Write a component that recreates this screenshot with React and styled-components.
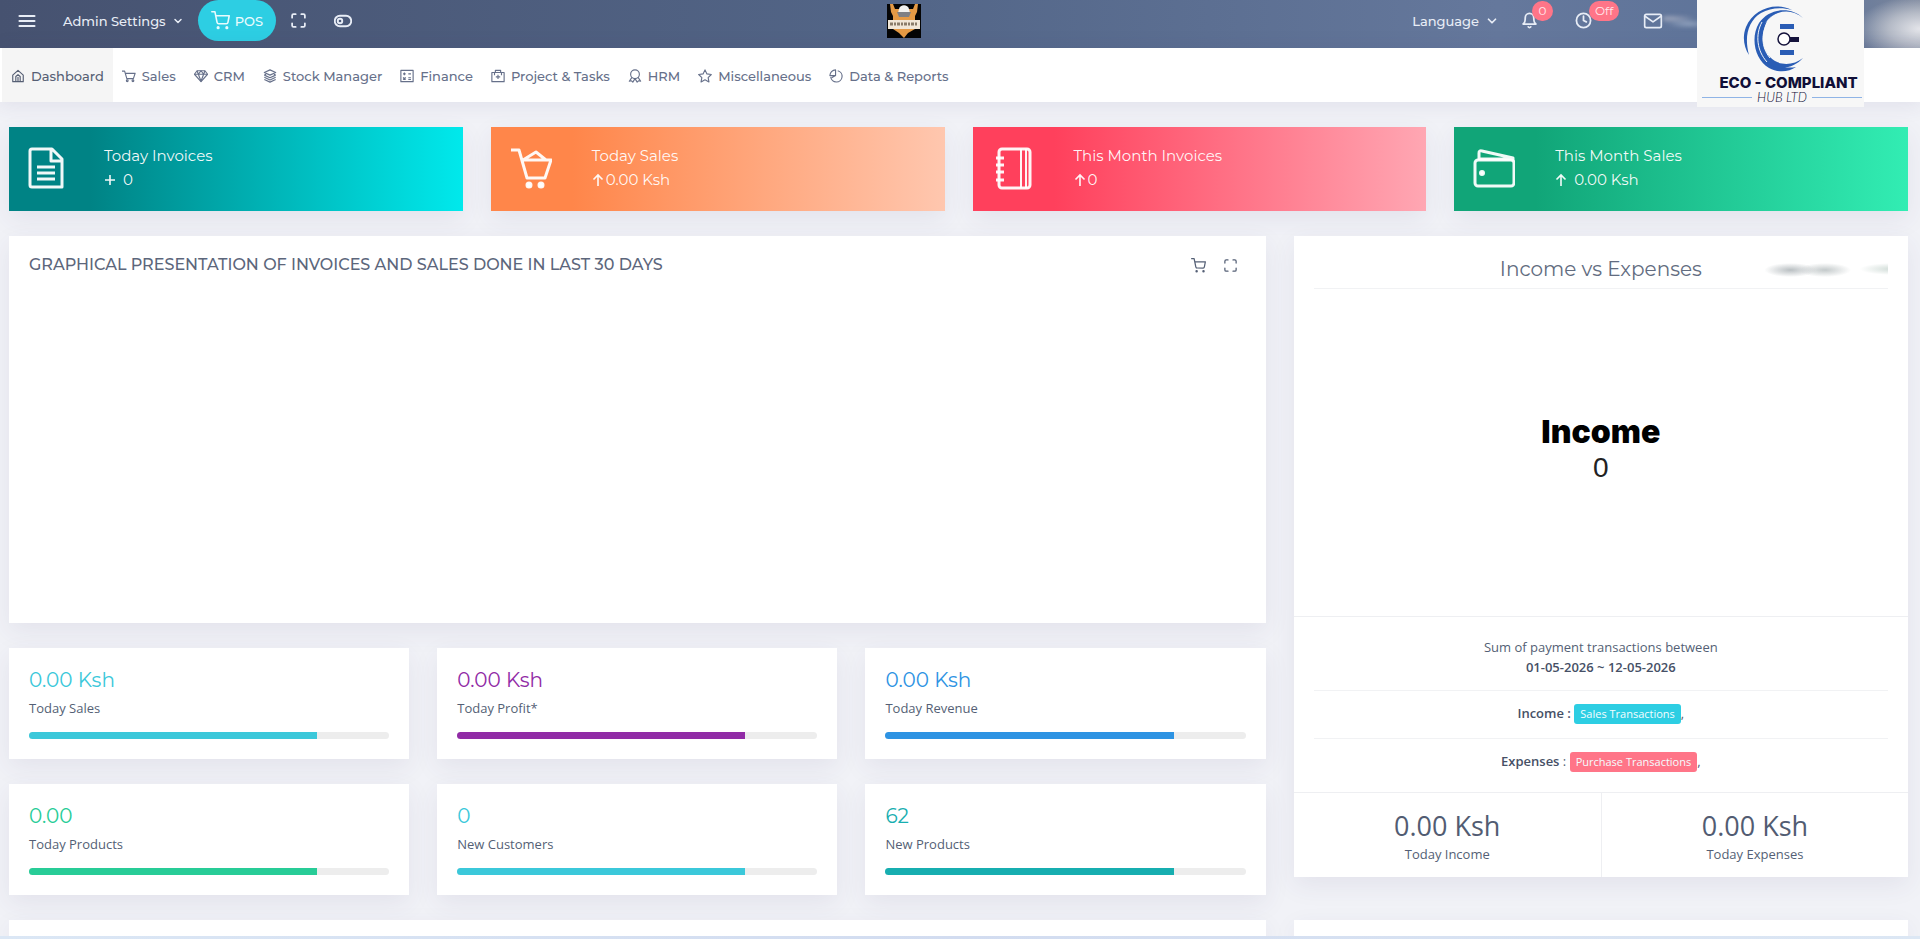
import React from "react";
import styled, { createGlobalStyle } from "styled-components";
import { FiMenu, FiMaximize, FiToggleLeft, FiBell, FiClock, FiMail, FiChevronDown, FiShoppingCart } from "react-icons/fi";

const display = `Montserrat, Inter, "Liberation Sans", sans-serif`;
const body = `"Open Sans", "Noto Sans", sans-serif`;

const GlobalStyle = createGlobalStyle`
  *, *::before, *::after { box-sizing: border-box; }
  body {
    margin: 0;
    background: #f1f2f7;
    color: #545f75;
    font: 13px/20px ${body};
  }
  button { border: 0; padding: 0; background: none; color: inherit; font: inherit; cursor: pointer; }
  a { color: inherit; text-decoration: none; }
  h1, h2, h3, p { margin: 0; font-weight: 400; }
`;

const Page = styled.div`
  min-height: 100vh;
  display: flex;
  flex-direction: column;
  position: relative;
`;

const TopBar = styled.header`
  height: 48px;
  padding: 0 129px 7px 17px;
  display: flex;
  align-items: center;
  color: #e8edf6;
  font: 500 13px/20px ${display};
  background:
    radial-gradient(ellipse at 100% 60%, #e4e5ea 0, #c3c7d0cc 40%, #8b95a800 80%) right / 56px 100% no-repeat,
    linear-gradient(90deg, #465270, #536688 48%, #65789c 78%, #5d7399 94%, #7c879d);
`;

const BarSide = styled.div`
  flex: 1;
  height: 41px;
  display: flex;
  align-items: center;
  justify-content: ${(p) => (p.$end ? "flex-end" : "flex-start")};
`;

const BarButton = styled.button`
  display: inline-flex;
  align-items: center;
  gap: 6px;
  position: relative;
  margin-left: ${(p) => p.$space || 0}px;
  white-space: nowrap;
`;

const PosButton = styled.button`
  height: 41px;
  margin: 0 14px;
  padding: 0 13px;
  display: inline-flex;
  align-items: center;
  gap: 5px;
  border-radius: 21px;
  background: #2dcee3;
  color: #e9fbfd;
`;

const CountBadge = styled.span`
  position: absolute;
  left: ${(p) => p.$left}px;
  top: -11px;
  min-width: 21px;
  height: 20px;
  padding: 0 6px;
  border-radius: 10px;
  background: #ff7588;
  color: #ffe9ec;
  font-size: 12px;
  font-weight: 400;
  line-height: 19px;
  text-align: center;
`;

const UserName = styled.span`
  width: 128px;
  height: 24px;
  background:
    radial-gradient(ellipse at 5% 40%, #b4b8c8 0, transparent 16%),
    radial-gradient(ellipse at 20% 62%, #a3b4cb 0, transparent 16%);
  filter: blur(2px);
`;

const NavBar = styled.nav`
  height: 54px;
  padding-left: 2px;
  display: flex;
  background: #fff;
  box-shadow: 0 2px 20px 2px rgba(62, 57, 107, 0.09);
  color: #66708a;
  font: 500 13px/20px ${display};
`;

const NavLink = styled.a`
  display: flex;
  align-items: center;
  gap: 6px;
  padding: 2px 9px 0;
  white-space: nowrap;
  background: ${(p) => (p.$active ? "#f5f5f5" : "transparent")};
  color: ${(p) => (p.$active ? "#565f74" : "inherit")};
`;

const Main = styled.main`
  flex: 1;
  padding: 25px 12px 0 9px;
  display: grid;
  grid-template-columns: repeat(12, 1fr);
  grid-template-rows: auto auto 1fr;
  gap: 25px 28px;
  align-items: start;
`;

const shadow = "0 8px 24px rgba(62, 57, 107, 0.08)";

const Summary = styled.article`
  grid-column: span 3;
  height: 84px;
  padding-left: 19px;
  display: flex;
  align-items: center;
  gap: 40px;
  background: linear-gradient(90deg, ${(p) => p.$from} 18%, ${(p) => p.$to});
  box-shadow: ${shadow};
  color: #fffffff0;
  padding-bottom: 2px;
  h2, p { font: 15px/24px ${display}; }
  p { display: flex; align-items: center; gap: ${(p) => (p.$spaced ? 7 : 2)}px; }
`;

const Panel = styled.section`
  background: #fff;
  box-shadow: ${shadow};
  grid-column: span ${(p) => p.$span};
`;

const LeftColumn = styled.div`
  grid-column: span 8;
  display: flex;
  flex-direction: column;
  gap: 25px;
`;

const ChartPanel = styled(Panel)`
  min-height: 387px;
  padding: 19px 28px 0 20px;
`;

const ChartHeader = styled.header`
  display: flex;
  justify-content: space-between;
  align-items: center;
  h2 { font: 500 16px/20px ${display}; color: #5c667b; }
  div { display: flex; gap: 17px; }
  button { display: flex; }
`;

const StatGrid = styled.div`
  display: grid;
  grid-template-columns: repeat(3, 1fr);
  gap: 25px 28px;
`;

const Stat = styled(Panel)`
  grid-column: auto;
  padding: 20px;
  h3 { font: 20px/24px ${display}; color: ${(p) => p.$color}; }
  p { margin: 4px 0 12px; line-height: 24px; }
`;

const Track = styled.div`
  height: 7px;
  border-radius: 4px;
  background: #ededed;
  overflow: hidden;
`;

const Fill = styled.div`
  height: 100%;
  background: ${(p) => p.$color};
`;

const IncomePanel = styled(Panel)`
  text-align: center;
`;

const IncomeTitle = styled.h2`
  margin: 0 20px;
  height: 53px;
  padding: 20px 0 6px;
  border-bottom: 1px solid #f1f2f4;
  font: 20px/26px ${display};
  color: #626c80;
  background:
    radial-gradient(ellipse 26px 7px at 83% 34px, #b9bfc2 0, transparent 100%),
    radial-gradient(ellipse 26px 7px at 89% 34px, #c3c9ca 0, transparent 100%),
    radial-gradient(ellipse 34px 6px at 101% 33px, #cfdbd6 0, transparent 100%);
`;

const Donut = styled.div`
  height: 327px;
  padding-bottom: 6px;
  display: flex;
  flex-direction: column;
  align-items: center;
  justify-content: center;
  color: #000;
  strong { font: 900 32px/36px Inter, sans-serif; }
  span { font: 28px/36px "Liberation Sans", sans-serif; color: #222; }
`;

const Details = styled.div`
  border-top: 1px solid #eeeff2;
  border-bottom: 1px solid #eeeff2;
  padding: 20px 20px 6px;
`;

const DetailRow = styled.p`
  padding: ${(p) => (p.$first ? "0 0 13px" : "12px 0 14px")};
  border-top: ${(p) => (p.$first ? 0 : 1)}px solid #f1f2f4;
  strong { font-weight: 600; color: #465066; }
`;

const Tag = styled.a`
  display: inline-block;
  padding: 0 6px;
  border-radius: 3px;
  background: ${(p) => p.$color};
  color: #f4fdff;
  font-size: 11px;
  line-height: 20px;
`;

const Totals = styled.div`
  display: grid;
  grid-template-columns: 1fr 1fr;
  div { padding: 15px 0 13px; }
  div + div { border-left: 1px solid #eeeff2; }
  h3 { font: 27px/36px ${body}; color: #525c72; }
  p { line-height: 20px; }
`;

const NextPanel = styled(Panel)`
  align-self: stretch;
  min-height: 16px;
`;

const BottomStrip = styled.footer`
  height: 3px;
  position: relative;
  background: linear-gradient(90deg, #dbe7f5, #d2dcf0 50%, #dce7f4);
`;

const Watermark = styled.aside`
  position: absolute;
  top: 0;
  right: 56px;
  width: 167px;
  padding-bottom: 3px;
  background: #f7f7f7;
  color: #100f38;
  svg { display: block; }
  strong { display: block; padding-left: 16px; text-align: center; font: 800 15px/17px Inter, sans-serif; white-space: nowrap; }
  span {
    display: flex;
    align-items: center;
    gap: 5px;
    padding: 0 2px 0 5px;
    font: italic 300 13px/13px Lato, sans-serif;
    white-space: nowrap;
  }
  span::before, span::after { content: ""; flex: 1; height: 1px; background: #8fb4e6; }
`;

const navShapes = {
  home: <><path d="M2 7 8 1.5 14 7v7.5H2z" /><path d="M5.5 14V8.5L8 6.5l2.5 2V14M8 9v5" /></>,
  cart: <><path d="M0 2.5h3l2.5 8.5h7.5L15 5H4" /><circle cx="6" cy="13.5" r="1" /><circle cx="12.5" cy="13.5" r="1" /></>,
  diamond: <><path d="M3.5 2h9L15.5 6 8 14.5.5 6z" /><path d="M.5 6h15M5 6l3 8 3-8M3.5 2 5 6l3-4 3 4 1.5-4" /></>,
  layers: <path d="m8 1 6.5 3L8 7 1.5 4zM1.500 7 8 10l6.500-3M1.500 9.500l6.500 3 6.500-3M1.500 12 8 15l6.500-3M1.500 7l2-1M14.500 7l-2-1" />,
  sheet: <><rect x="1" y="1.5" width="14" height="13" /><path d="M3.500 5.500h3M5 4v3M9.500 5.500h3M3.500 9.500l3 2.500M6.500 9.500l-3 2.500M9.500 10h3M9.500 12h3" /></>,
  project: <><rect x="1" y="4" width="14" height="10.5" /><path d="M5 4V1.500h6V4M4 4v3M12 4v3M8 6.500v5M5.500 9h5" /></>,
  ribbon: <><circle cx="8" cy="6" r="5" /><path d="M4.500 9.500 1.500 14l2.500-.5 1.500 1.500L8 11l2.500 4 1.500-1.500 2.500.5-3-4.500" /></>,
  star: <path d="m8 1 2.200 4.600 5 .7-3.600 3.500.9 5L8 12.400l-4.500 2.400.9-5L.8 6.300l5-.7z" />,
  pie: <><path d="M10 2a6.500 6.500 0 1 1-8 7" /><path d="M7.500 1v6.500H1A6.500 6.500 0 0 1 7.500 1zM7.500 7.500 3 10" /></>,
};

const NavIcon = ({ name }) => (
  <svg width="14" height="14" viewBox="0 0 16 16" fill="none" stroke="currentColor" strokeWidth="1.3" strokeLinejoin="round" aria-hidden="true">
    {navShapes[name]}
  </svg>
);

const bigShapes = {
  file: [36, <><path d="M4 2h20l10 10v28H4a2 2 0 0 1-2-2V4a2 2 0 0 1 2-2zM23 3v11h11" /><path d="M9 20h18M9 26h18M9 32h18" /></>],
  cart: [42, <><path d="M1 3h8l8 28h18l6-18H12M13 13l13-8 10 8" /><circle cx="19" cy="38" r="2" fill="currentColor" /><circle cx="31" cy="38" r="2" fill="currentColor" /></>],
  book: [42, <><rect x="7" y="2" width="31" height="39" rx="3" /><path d="M29 2v39M34 2v39" strokeWidth="2" /><path d="M4 11h8M4 18h8M4 25h8M4 33h8" /></>],
  wallet: [42, <><rect x="2" y="13" width="39" height="26" rx="3" /><path d="M6 13V6a2 2 0 0 1 3-2l31 7v3M7 12h33" /><circle cx="9" cy="26" r="1.5" fill="currentColor" /></>],
};

const BigIcon = ({ name }) => (
  <svg width={bigShapes[name][0]} height="43" viewBox={`0 0 ${bigShapes[name][0]} 43`} fill="none" stroke="currentColor" strokeWidth="3" strokeLinejoin="round" aria-hidden="true">
    {bigShapes[name][1]}
  </svg>
);

const Mark = ({ plus }) => (
  <svg width="12" height="14" viewBox="0 0 12 14" fill="none" stroke="currentColor" strokeWidth="1.6" aria-hidden="true">
    <path d={plus ? "M1 7h10M6 2v10" : "M6 13V2M1.500 6.500 6 2l4.500 4.500"} />
  </svg>
);

const CompanyLogo = () => (
  <svg width="34" height="34" viewBox="0 0 34 34" role="img" aria-label="Company logo">
    <path fill="#050505" d="M0 0h34v34H0z" />
    <path fill="#e59a45" d="M3 0h3l2 5h18l2-5h3l-1 8-2 4v13l-7 4-4 5-5-5-6-4V12L4 8z" />
    <path fill="#f2f2f0" d="M12 5c1-5 9-5 10 0l1 4H11z" />
    <path fill="#7f8084" d="M10 8h14l-2 5H12z" />
    <path fill="#f1e7d7" d="M1 16h32v9H1z" />
    <path stroke="#8a7c69" strokeWidth="3" strokeDasharray="3 1 2 1" d="M3 20h28" />
  </svg>
);

const EcoMark = () => (
  <svg width="167" height="74" viewBox="0 0 167 74" aria-hidden="true">
    <g fill="#2a5db5">
      <path d="M106 18C94 6 72 8 62 23c-9 15-4 37 10 45 9 5 20 4 27-1-10 2-20-1-26-9C57 40 64 18 81 13c9-3 18-1 25 5z" />
      <path d="M95 10C77 1 56 10 49 27c-4 10-2 20 3 28-5-18-1-34 12-42 9-5 20-6 31-3z" />
      <path d="M82 12C66 18 57 34 61 48c3 13 14 21 27 21-12-3-21-11-24-23-3-14 4-28 18-34z" />
      <path d="M70 21c-6 12-6 27 3 36 8 9 23 9 33 1-8 9-23 14-35 5C58 53 58 33 70 21z" />
      <path d="M83 24h14v5H83zM83 50h14v5H83z" />
    </g>
    <path d="M71 22c-7 11-7 25 2 36M65 22c-7 13-5 29 5 40" fill="none" stroke="#f7f7f7" />
    <circle cx="87" cy="39" r="6" fill="#fff" stroke="#15133c" strokeWidth="1.5" />
    <path fill="#15133c" d="M93 37h9v5h-9z" />
  </svg>
);

const navItems = [
  ["home", "Dashboard"], ["cart", "Sales"], ["diamond", "CRM"], ["layers", "Stock Manager"], ["sheet", "Finance"],
  ["project", "Project & Tasks"], ["ribbon", "HRM"], ["star", "Miscellaneous"], ["pie", "Data & Reports"],
];

const summaries = [
  { icon: "file", title: "Today Invoices", value: "0", plus: true, spaced: true, from: "#008385", to: "#00e9ec" },
  { icon: "cart", title: "Today Sales", value: "0.00 Ksh", from: "#ff864a", to: "#ffc7af" },
  { icon: "book", title: "This Month Invoices", value: "0", from: "#ff405c", to: "#ffa7b3" },
  { icon: "wallet", title: "This Month Sales", value: "0.00 Ksh", spaced: true, from: "#11a578", to: "#32edb3" },
];

const stats = [
  ["0.00 Ksh", "Today Sales", "#3bc8da"], ["0.00 Ksh", "Today Profit*", "#912ba6"], ["0.00 Ksh", "Today Revenue", "#2d93e3"],
  ["0.00", "Today Products", "#28cc97"], ["0", "New Customers", "#3bc8da"], ["62", "New Products", "#17aeb0"],
];

export default function App() {
  return (
    <Page>
      <GlobalStyle />
      <TopBar>
        <BarSide>
          <BarButton aria-label="Toggle menu"><FiMenu size={20} strokeWidth={2.5} /></BarButton>
          <BarButton $space={26}>Admin Settings <FiChevronDown size={12} strokeWidth={3} /></BarButton>
          <PosButton><FiShoppingCart size={19} />POS</PosButton>
          <BarButton aria-label="Full screen"><FiMaximize size={17} strokeWidth={2.5} /></BarButton>
          <BarButton $space={27} aria-label="Toggle theme"><FiToggleLeft size={18} strokeWidth={2.5} /></BarButton>
        </BarSide>
        <CompanyLogo />
        <BarSide $end>
          <BarButton>Language <FiChevronDown size={14} strokeWidth={3} /></BarButton>
          <BarButton $space={22} aria-label="Notifications"><FiBell size={17} strokeWidth={2.5} /><CountBadge $left={11}>0</CountBadge></BarButton>
          <BarButton $space={37} aria-label="Attendance clock"><FiClock size={17} strokeWidth={2.5} /><CountBadge $left={14}>Off</CountBadge></BarButton>
          <BarButton $space={51} aria-label="Messages"><FiMail size={20} /></BarButton>
          <UserName />
        </BarSide>
      </TopBar>
      <NavBar>
        {navItems.map(([icon, label], i) => (
          <NavLink key={label} href="#" $active={i === 0}><NavIcon name={icon} />{label}</NavLink>
        ))}
      </NavBar>
      <Main>
        {summaries.map((s) => (
          <Summary key={s.title} $from={s.from} $to={s.to} $spaced={s.spaced}>
            <BigIcon name={s.icon} />
            <div><h2>{s.title}</h2><p><Mark plus={s.plus} />{s.value}</p></div>
          </Summary>
        ))}
        <LeftColumn>
          <ChartPanel>
            <ChartHeader>
              <h2>GRAPHICAL PRESENTATION OF INVOICES AND SALES DONE IN LAST 30 DAYS</h2>
              <div>
                <button aria-label="Sales"><FiShoppingCart size={15} /></button>
                <button aria-label="Expand"><FiMaximize size={15} /></button>
              </div>
            </ChartHeader>
          </ChartPanel>
          <StatGrid>
            {stats.map(([value, label, color]) => (
              <Stat key={label} $color={color}>
                <h3>{value}</h3>
                <p>{label}</p>
                <Track role="progressbar" aria-label={label} aria-valuenow={80}><Fill $color={color} style={{ width: "80%" }} /></Track>
              </Stat>
            ))}
          </StatGrid>
        </LeftColumn>
        <IncomePanel $span={4}>
          <IncomeTitle>Income vs Expenses</IncomeTitle>
          <Donut><strong>Income</strong><span>0</span></Donut>
          <Details>
            <DetailRow $first>Sum of payment transactions between<br /><strong>01-05-2026 ~ 12-05-2026</strong></DetailRow>
            <DetailRow><strong>Income :</strong> <Tag href="#" $color="#2dcee3">Sales Transactions</Tag>,</DetailRow>
            <DetailRow><strong>Expenses</strong> : <Tag href="#" $color="#ff7588">Purchase Transactions</Tag>,</DetailRow>
          </Details>
          <Totals>
            <div><h3>0.00 Ksh</h3><p>Today Income</p></div>
            <div><h3>0.00 Ksh</h3><p>Today Expenses</p></div>
          </Totals>
        </IncomePanel>
        <NextPanel $span={8} />
        <NextPanel $span={4} />
      </Main>
      <BottomStrip />
      <Watermark>
        <EcoMark />
        <strong>ECO - COMPLIANT</strong>
        <span>HUB LTD</span>
      </Watermark>
    </Page>
  );
}
